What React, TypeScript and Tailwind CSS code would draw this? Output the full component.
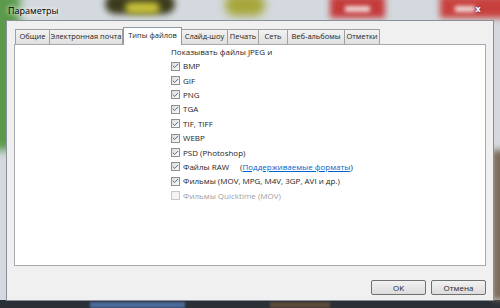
import { Check } from "lucide-react";

const tabs = [
  { label: "Общие", w: "w-[35px]" },
  { label: "Электронная почта", w: "w-[74px]" },
  { label: "Типы файлов", w: "w-[59px]", active: true },
  { label: "Слайд-шоу", w: "w-[47px]" },
  { label: "Печать", w: "w-[32px]" },
  { label: "Сеть", w: "w-[30px]" },
  { label: "Веб-альбомы", w: "w-[58px]" },
  { label: "Отметки", w: "w-[36px]" },
];

const formats = ["BMP", "GIF", "PNG", "TGA", "TIF, TIFF", "WEBP", "PSD (Photoshop)"];

function Box({ checked = true, disabled = false }: { checked?: boolean; disabled?: boolean }) {
  return (
    <span
      className={
        disabled
          ? "w-[9px] h-[9px] border border-[#c8c8c8] bg-[#f4f4f4] shrink-0"
          : "w-[9px] h-[9px] border border-[#8e8f8f] bg-gradient-to-br from-[#dcdcdc] to-[#fbfbfb] flex items-center justify-center shrink-0"
      }
    >
      {checked && !disabled && <Check size={8} strokeWidth={3} className="text-[#3c5a88]" />}
    </span>
  );
}

function Row({ children, disabled }: { children: React.ReactNode; disabled?: boolean }) {
  return (
    <div className="h-[14.4px] flex items-center gap-[3px]">
      <Box disabled={disabled} />
      {children}
    </div>
  );
}

export default function App() {
  return (
    <div
      className="relative w-[500px] h-[308px] overflow-hidden bg-[#d3d9de] text-[#1e1e1e]"
      style={{ fontFamily: '"Open Sans", "Noto Sans", sans-serif' }}
    >
      {/* blurred desktop behind the glass frame */}
      <div className="absolute inset-0 overflow-hidden">
        <div className="absolute left-[-10px] top-[-10px] w-[30px] h-[160px] bg-[#5a9a4a] blur-[4px]" />
        <div className="absolute left-[105px] top-[-6px] w-[70px] h-[20px] rounded-full bg-[#3b3a1c] blur-[3px]" />
        <div className="absolute left-[125px] top-[2px] w-[35px] h-[12px] rounded-full bg-[#c8c23a] blur-[3px]" />
        <div className="absolute left-[225px] top-[-6px] w-[40px] h-[22px] rounded-full bg-[#a6a63a] blur-[4px]" />
        <div className="absolute left-[330px] top-[-4px] w-[55px] h-[22px] bg-[#c53a3a] blur-[3px]" />
        <div className="absolute left-[345px] top-[6px] w-[25px] h-[6px] bg-[#f0d8d8] blur-[2px]" />
        <div className="absolute left-[440px] top-[-4px] w-[70px] h-[22px] bg-[#c8403e] blur-[3px]" />
        <div className="absolute left-[455px] top-[6px] w-[20px] h-[6px] bg-[#f0d8d8] blur-[2px]" />
        <div className="absolute left-0 bottom-0 w-[500px] h-[8px] bg-[#2b2f36]" />
        <div className="absolute left-[90px] bottom-0 w-[95px] h-[6px] bg-[#4a6a9a] blur-[1px]" />
        <div className="absolute left-[270px] bottom-0 w-[60px] h-[6px] bg-[#5b4a3a] blur-[1px]" />
        <div className="absolute right-[-6px] top-[150px] w-[14px] h-[150px] bg-[#7a6a5a] blur-[3px]" />
      </div>

      <div className="relative flex flex-col h-full">
        {/* title bar */}
        <div className="h-[20px] flex items-start justify-between pl-[8px] pr-[12px]">
          <span className="text-[9px] leading-[11px] mt-[5px] text-black [text-shadow:0_0_6px_#fff,0_0_4px_#fff]">
            Параметры
          </span>
          <span className="w-[20px] h-[14px] mt-[2px] flex items-center justify-center text-[9px] font-bold text-white [text-shadow:0_0_2px_#333]">
            x
          </span>
        </div>

        {/* client area */}
        <div className="mx-[6px] h-[281px] bg-[#f0f0f0] border border-[#8a9099] flex flex-col px-[7px]">
          {/* tabs */}
          <div className="flex items-end h-[23px] pl-[1px] text-[7.5px]">
            {tabs.map((t) =>
              t.active ? (
                <div
                  key={t.label}
                  className={`${t.w} h-[18px] bg-white border border-b-0 border-[#8e9aa8] -mb-px relative z-10 flex items-center justify-center pb-[2px]`}
                >
                  {t.label}
                </div>
              ) : (
                <div
                  key={t.label}
                  className={`${t.w} h-[15px] bg-gradient-to-b from-[#f2f2f2] to-[#e0e0e0] border border-b-0 border-[#a0a0a0] -ml-px first:ml-0 flex items-center justify-center`}
                >
                  {t.label}
                </div>
              )
            )}
          </div>

          {/* panel */}
          <div className="h-[222px] bg-white border border-[#a8a8b0] pl-[156px] pt-0 text-[8px]">
            <div className="h-[14px] flex items-center">Показывать файлы JPEG и</div>
            {formats.map((f) => (
              <Row key={f}>
                <span>{f}</span>
              </Row>
            ))}
            <Row>
              <span>Файлы RAW</span>
              <span className="ml-[8px]">
                (<span className="text-[#0066cc] underline">Поддерживаемые форматы</span>)
              </span>
            </Row>
            <Row>
              <span>Фильмы (MOV, MPG, M4V, 3GP, AVI и др.)</span>
            </Row>
            <Row disabled>
              <span className="text-[#a0a0a0]">Фильмы Quicktime (MOV)</span>
            </Row>
          </div>

          {/* buttons */}
          <div className="flex justify-end gap-[5px] mt-[14px] text-[8px]">
            <button className="w-[55px] h-[15px] border border-[#707070] rounded-[2px] bg-gradient-to-b from-[#f2f2f2] to-[#dcdcdc] flex items-center justify-center">
              OK
            </button>
            <button className="w-[55px] h-[15px] border border-[#707070] rounded-[2px] bg-gradient-to-b from-[#f2f2f2] to-[#dcdcdc] flex items-center justify-center">
              Отмена
            </button>
          </div>
        </div>
      </div>
    </div>
  );
}
